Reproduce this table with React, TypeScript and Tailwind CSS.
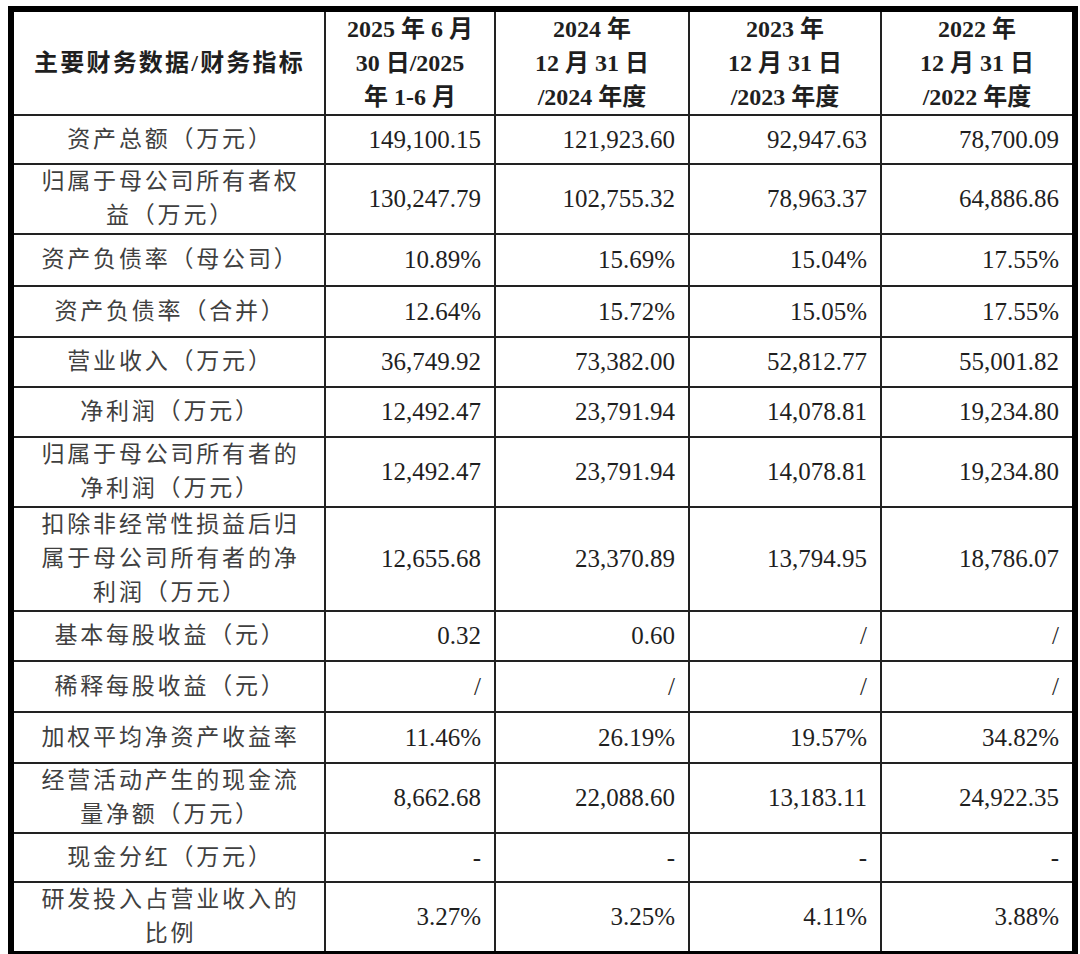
const rows: { label: string[]; values: string[]; h: string }[] = [
  { label: ['资产总额（万元）'], values: ['149,100.15', '121,923.60', '92,947.63', '78,700.09'], h: 'h-[49px]' },
  { label: ['归属于母公司所有者权', '益（万元）'], values: ['130,247.79', '102,755.32', '78,963.37', '64,886.86'], h: 'h-[67px]' },
  { label: ['资产负债率（母公司）'], values: ['10.89%', '15.69%', '15.04%', '17.55%'], h: 'h-[52px]' },
  { label: ['资产负债率（合并）'], values: ['12.64%', '15.72%', '15.05%', '17.55%'], h: 'h-[51px]' },
  { label: ['营业收入（万元）'], values: ['36,749.92', '73,382.00', '52,812.77', '55,001.82'], h: 'h-[50px]' },
  { label: ['净利润（万元）'], values: ['12,492.47', '23,791.94', '14,078.81', '19,234.80'], h: 'h-[50px]' },
  { label: ['归属于母公司所有者的', '净利润（万元）'], values: ['12,492.47', '23,791.94', '14,078.81', '19,234.80'], h: 'h-[69px]' },
  { label: ['扣除非经常性损益后归', '属于母公司所有者的净', '利润（万元）'], values: ['12,655.68', '23,370.89', '13,794.95', '18,786.07'], h: 'h-[101px]' },
  { label: ['基本每股收益（元）'], values: ['0.32', '0.60', '/', '/'], h: 'h-[50px]' },
  { label: ['稀释每股收益（元）'], values: ['/', '/', '/', '/'], h: 'h-[51px]' },
  { label: ['加权平均净资产收益率'], values: ['11.46%', '26.19%', '19.57%', '34.82%'], h: 'h-[51px]' },
  { label: ['经营活动产生的现金流', '量净额（万元）'], values: ['8,662.68', '22,088.60', '13,183.11', '24,922.35'], h: 'h-[68px]' },
  { label: ['现金分红（万元）'], values: ['-', '-', '-', '-'], h: 'h-[49px]' },
  { label: ['研发投入占营业收入的', '比例'], values: ['3.27%', '3.25%', '4.11%', '3.88%'], h: 'h-[63px]' },
]

const periods = [
  ['2025 年 6 月', '30 日/2025', '年 1-6 月'],
  ['2024 年', '12 月 31 日', '/2024 年度'],
  ['2023 年', '12 月 31 日', '/2023 年度'],
  ['2022 年', '12 月 31 日', '/2022 年度'],
]

export default function App() {
  return (
    <div className="w-[1080px] h-[954px] bg-white pt-[6px] pl-[8px]">
      <div
        className="w-[1070px] border-[6px] border-black"
        style={{ fontFamily: '"Liberation Serif", "Noto Sans CJK SC", serif' }}
      >
        <table className="w-[1058px] table-fixed border-collapse border-hidden text-[#1f1f1f]">
          <colgroup>
            <col className="w-[311px]" />
            <col className="w-[170px]" />
            <col className="w-[194px]" />
            <col className="w-[192px]" />
            <col className="w-[191px]" />
          </colgroup>
          <thead>
            {/* Header */}
            <tr className="h-[102px]">
              <th className="border-2 border-[#222] text-center align-middle text-[24px] font-bold tracking-[2.2px] whitespace-nowrap pl-[1px]">
                主要财务数据/财务指标
              </th>
              {periods.map((p, i) => (
                <th
                  key={i}
                  className="border-2 border-[#222] text-center align-middle text-[24px] font-bold leading-[34px] whitespace-pre"
                >
                  {p.map((line, j) => (
                    <div key={j}>{line}</div>
                  ))}
                </th>
              ))}
            </tr>
          </thead>
          <tbody>
            {rows.map((row, i) => (
              <tr key={i} className={row.h}>
                <td className="border-2 border-[#222] text-center align-middle text-[23px] leading-[34px] tracking-[2.8px] text-[#404040] whitespace-nowrap pl-[3px]">
                  {row.label.map((line, j) => (
                    <div key={j}>{line}</div>
                  ))}
                </td>
                {row.values.map((v, j) => (
                  <td
                    key={j}
                    className="border-2 border-[#222] text-right align-middle text-[25px] pr-[13px] whitespace-nowrap"
                  >
                    {v}
                  </td>
                ))}
              </tr>
            ))}
          </tbody>
        </table>
      </div>
    </div>
  )
}
